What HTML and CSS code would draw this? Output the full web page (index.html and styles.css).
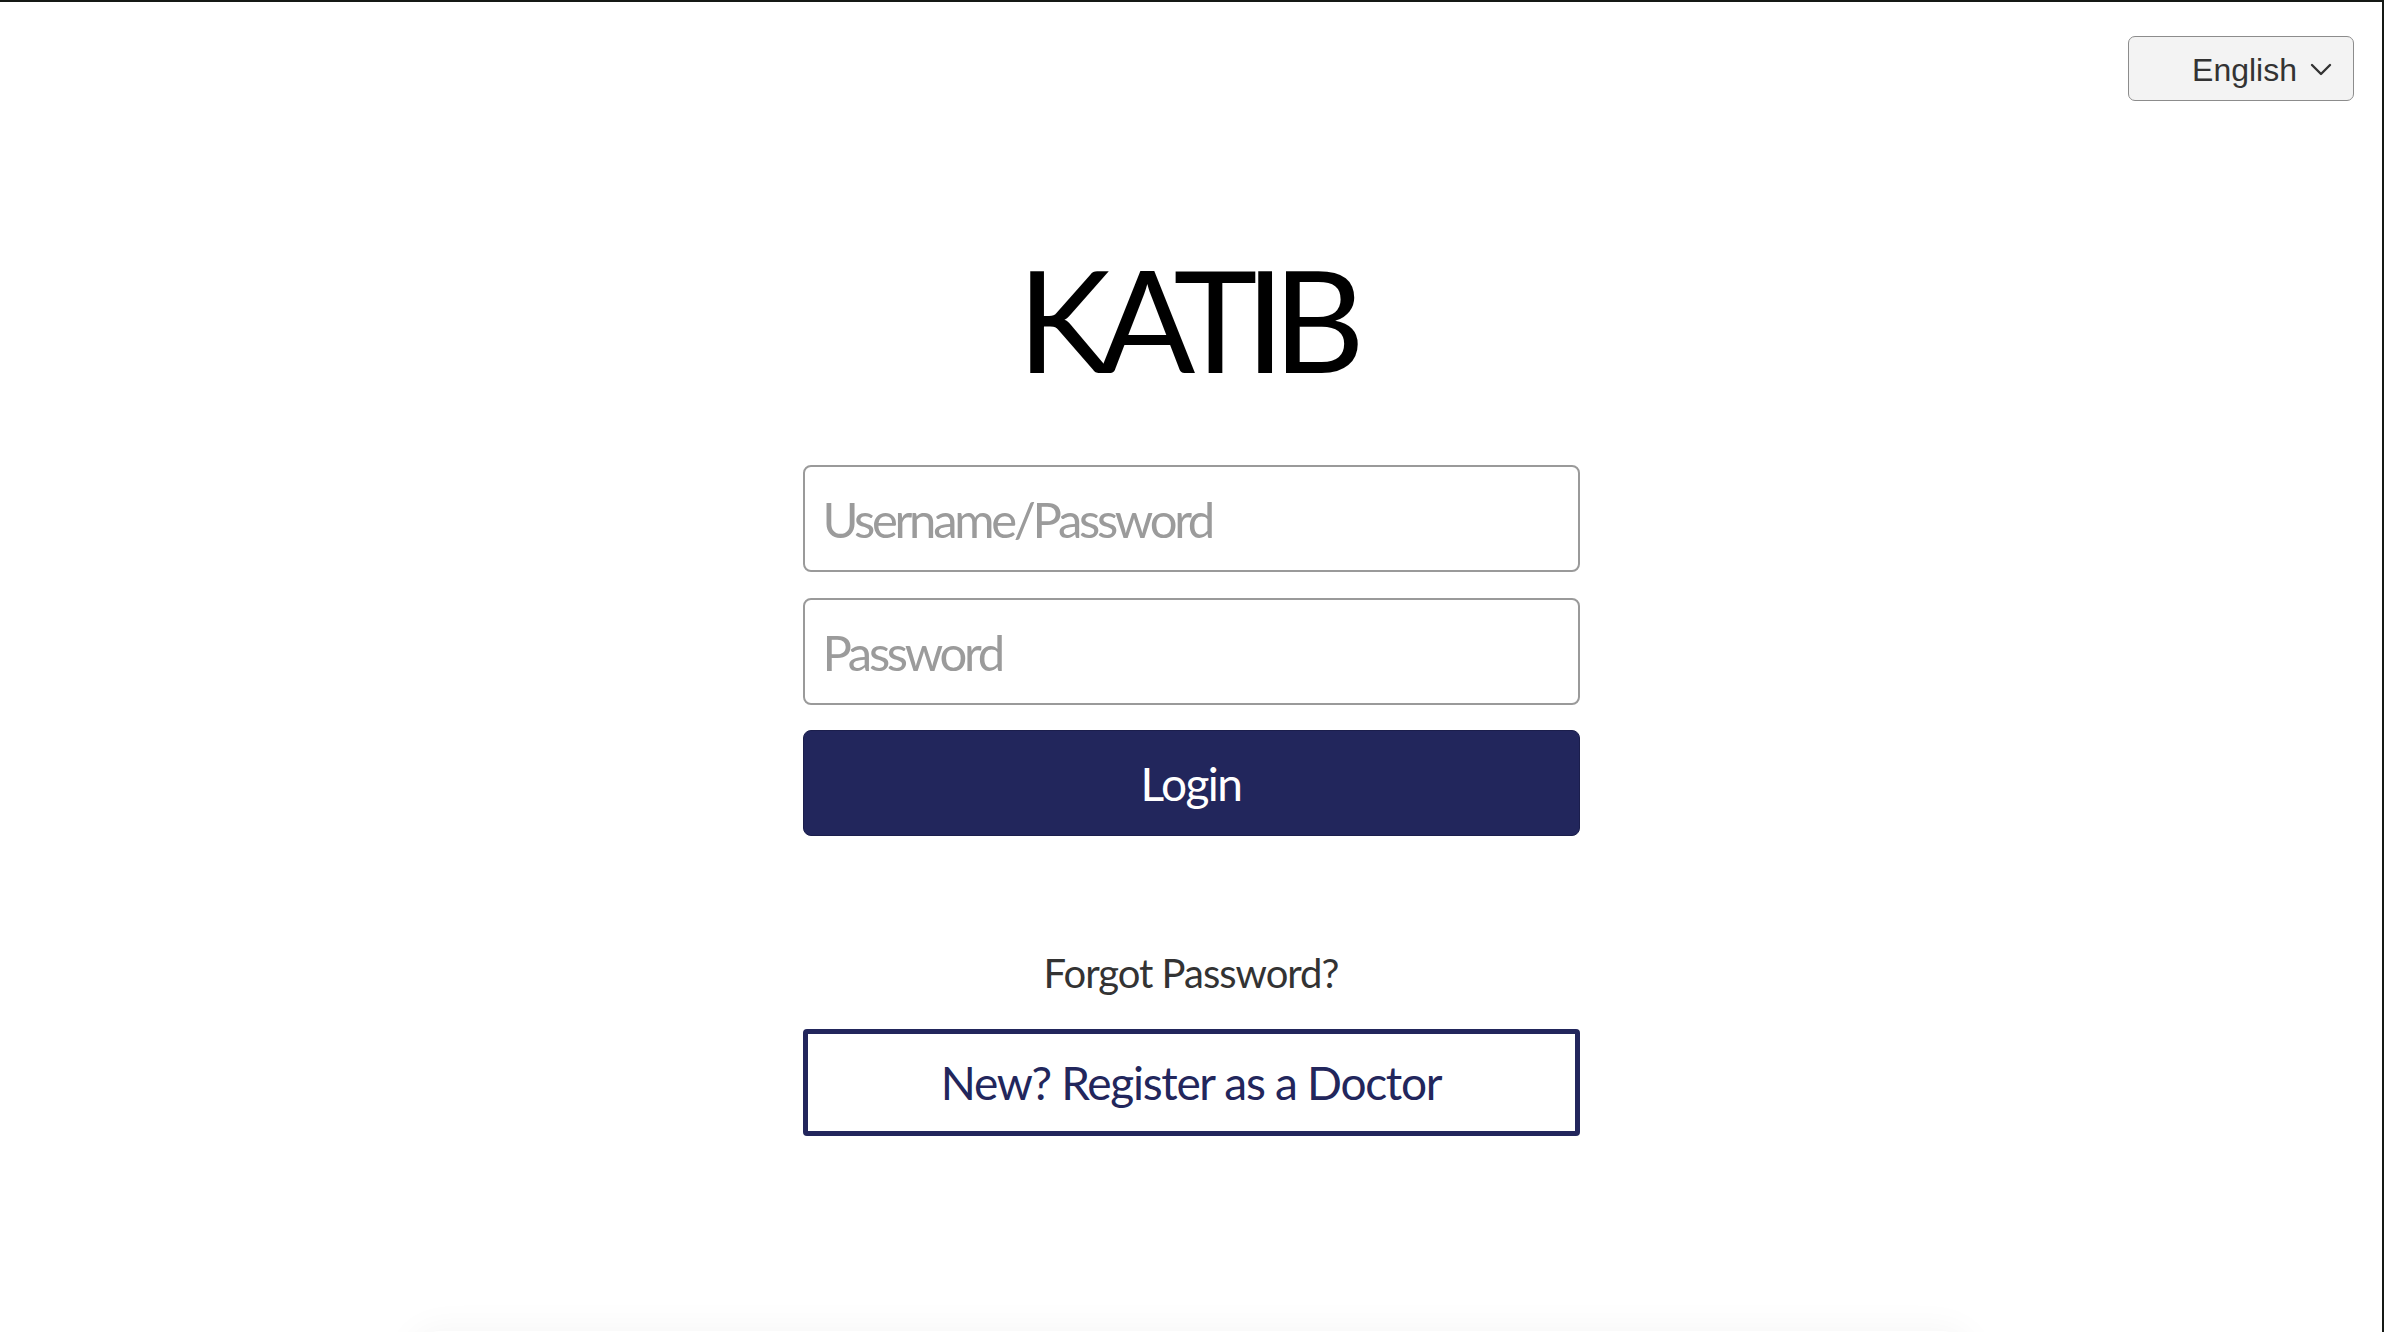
FILE: index.html
```html
<!DOCTYPE html>
<html lang="en">
<head>
<meta charset="utf-8">
<title>KATIB - Login</title>
<link rel="stylesheet" href="styles.css">
</head>
<body>
<div class="page">
  <header class="topbar">
    <div class="lang-select">
      <span class="lang-label">English</span>
      <svg class="chevron" width="22" height="13" viewBox="0 0 22 13"><polyline points="2,2 11,11 20,2" fill="none" stroke="#333" stroke-width="2.4" stroke-linecap="round" stroke-linejoin="round"/></svg>
    </div>
  </header>
  <main class="login">
    <h1 class="brand">KATIB</h1>
    <form class="login-form">
      <input class="field" type="text" placeholder="Username/Password">
      <input class="field field-second" type="password" placeholder="Password">
      <button class="btn-primary" type="button">Login</button>
      <a class="forgot" href="#">Forgot Password?</a>
      <button class="btn-outline" type="button">New? Register as a Doctor</button>
    </form>
    <div class="bottom-card"></div>
  </main>
</div>
</body>
</html>
```
FILE: styles.css
```css
html {
  background: #151915;
}
body {
  margin: 2px 2px 0 0;
  background: #ffffff;
  height: 1330px;
  overflow: hidden;
  font-family: Lato, "Noto Sans", sans-serif;
}
.page {
  display: flex;
  flex-direction: column;
}
.topbar {
  display: flex;
  justify-content: flex-end;
  padding: 34px 28px 0 0;
}
.lang-select {
  box-sizing: border-box;
  width: 226px;
  height: 65px;
  display: flex;
  align-items: center;
  justify-content: flex-end;
  gap: 13px;
  padding: 3px 21px 0 0;
  background: #f3f3f3;
  border: 1.5px solid #8c8c8c;
  border-radius: 7px;
  font-family: "Liberation Sans", Arial, sans-serif;
  font-size: 32px;
  color: #333333;
}
.chevron {
  display: block;
  margin-top: -2px;
}
.login {
  display: flex;
  flex-direction: column;
  align-items: center;
}
.brand {
  margin: 146px 0 0 0;
  padding-right: 12px;
  font-size: 142px;
  line-height: 1;
  font-weight: 400;
  letter-spacing: -12px;
  color: #000;
}
.login-form {
  display: flex;
  flex-direction: column;
  align-items: stretch;
  width: 777px;
  margin-top: 76px;
}
.field {
  box-sizing: border-box;
  height: 107px;
  border: 2px solid #9a9a9a;
  border-radius: 8px;
  padding: 0 18px;
  font-family: Lato, "Noto Sans", sans-serif;
  font-size: 49px;
  letter-spacing: -3.3px;
  color: #222;
  background: #fff;
  outline: none;
}
.field::placeholder {
  color: #9b9b9b;
}
.field-second {
  margin-top: 26px;
}
.btn-primary {
  margin-top: 25px;
  height: 106px;
  box-sizing: border-box;
  background: #22265c;
  border: 1px solid #1b1e4c;
  border-radius: 8px;
  color: #ffffff;
  font-family: Lato, "Noto Sans", sans-serif;
  font-size: 46px;
  letter-spacing: -1.5px;
  cursor: pointer;
}
.forgot {
  margin-top: 113px;
  align-self: center;
  font-size: 40px;
  line-height: 48px;
  letter-spacing: -1px;
  color: #333333;
  text-decoration: none;
}
.btn-outline {
  margin-top: 32px;
  height: 107px;
  box-sizing: border-box;
  background: #ffffff;
  border: 5px solid #22265c;
  border-radius: 4px;
  color: #22265c;
  font-family: Lato, "Noto Sans", sans-serif;
  font-size: 46px;
  letter-spacing: -1.3px;
  cursor: pointer;
}
.bottom-card {
  margin-top: 195px;
  width: 1560px;
  height: 60px;
  border-radius: 40px;
  box-shadow: 0 0 34px 4px rgba(0, 0, 0, 0.04);
}
```
